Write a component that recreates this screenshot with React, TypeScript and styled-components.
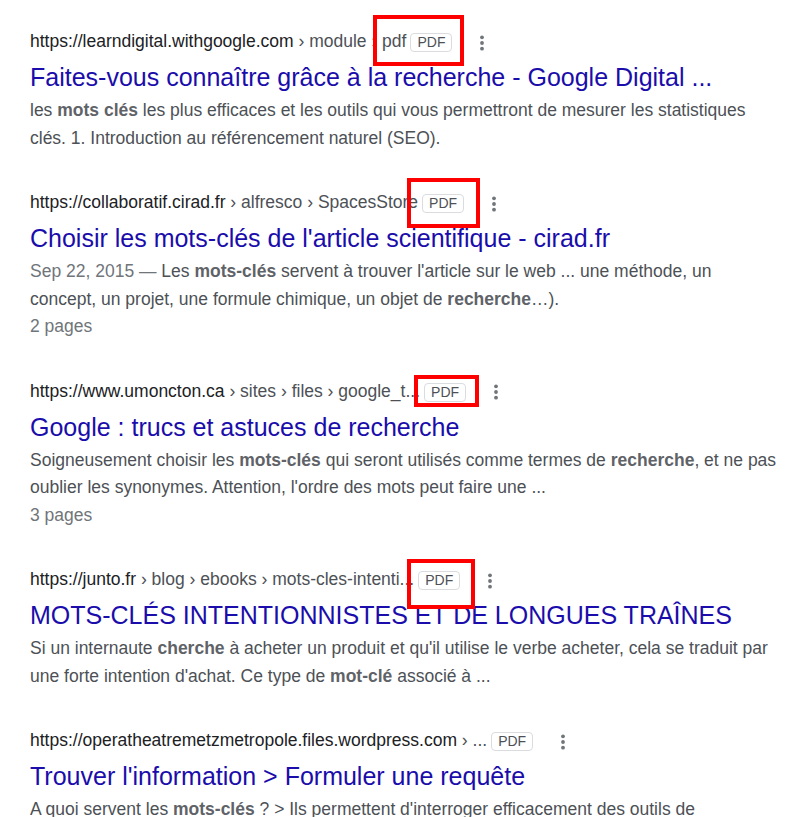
import React from "react";
import styled, { createGlobalStyle } from "styled-components";

const Global = createGlobalStyle`
  html, body { margin: 0; padding: 0; background: #fff; }
  body { font-family: "Liberation Sans", Arial, sans-serif; }
`;

const Page = styled.div`
  padding: 27px 0 0 30px;
  width: 750px;
`;

const Result = styled.div`
  margin-bottom: 36px;
`;

const UrlRow = styled.div`
  display: flex;
  align-items: center;
  height: 28px;
  font-size: 17.5px;
  line-height: 28px;
  white-space: nowrap;
`;

const Domain = styled.span`
  color: #202124;
`;

const Path = styled.span`
  color: #4d5156;
`;

const Badge = styled.span`
  position: relative;
  display: inline-block;
  margin-left: 4px;
  margin-top: 3px;
  padding: 0 6px;
  height: 17px;
  line-height: 17px;
  font-size: 14px;
  color: #4d5156;
  border: 1px solid #dadce0;
  border-radius: 4px;
`;

const Highlight = styled.span<{ $l: number; $t: number; $w: number; $h: number }>`
  position: absolute;
  left: ${(p) => p.$l}px;
  top: ${(p) => p.$t}px;
  width: ${(p) => p.$w}px;
  height: ${(p) => p.$h}px;
  box-sizing: border-box;
  border: 4px solid #ff0000;
  pointer-events: none;
`;

const MoreButton = styled.span`
  display: inline-flex;
  margin-left: 20px;
  margin-top: 3px;
  width: 20px;
  height: 20px;
  color: #70757a;
`;

const Title = styled.h3`
  margin: 6px 0 0;
  font-size: 25px;
  line-height: 32px;
  font-weight: 400;
  color: #1a0dab;
  white-space: nowrap;
`;

const Snippet = styled.div`
  margin-top: 4px;
  font-size: 17.5px;
  line-height: 27.5px;
  color: #4d5156;
  b {
    font-weight: 700;
    color: #5f6368;
  }
`;

const Muted = styled.span`
  color: #70757a;
`;

const Pages = styled.div`
  font-size: 17.5px;
  line-height: 27.5px;
  color: #70757a;
`;

const MoreIcon = () => (
  <svg width="20" height="20" viewBox="0 0 20 20" fill="currentColor">
    <circle cx="10" cy="4.3" r="1.9" />
    <circle cx="10" cy="10" r="1.9" />
    <circle cx="10" cy="15.7" r="1.9" />
  </svg>
);

type Box = { l: number; t: number; w: number; h: number };

type Item = {
  domain: string;
  path: string;
  title: string;
  snippet: React.ReactNode;
  pages?: string;
  box?: Box;
};

const items: Item[] = [
  {
    domain: "https://learndigital.withgoogle.com",
    path: "\u00a0› module › pdf",
    title: "Faites-vous connaître grâce à la recherche - Google Digital ...",
    snippet: (
      <>
        les <b>mots clés</b> les plus efficaces et les outils qui vous permettront de mesurer les
        statistiques clés. 1. Introduction au référencement naturel (SEO).
      </>
    ),
    box: { l: -38, t: -19, w: 91, h: 51 },
  },
  {
    domain: "https://collaboratif.cirad.fr",
    path: "\u00a0› alfresco › SpacesStore",
    title: "Choisir les mots-clés de l'article scientifique - cirad.fr",
    snippet: (
      <>
        <Muted>Sep 22, 2015 — </Muted>Les <b>mots-clés</b> servent à trouver l'article sur le web ...
        une méthode, un concept, un projet, une formule chimique, un objet de <b>recherche</b>…).
      </>
    ),
    pages: "2 pages",
    box: { l: -16, t: -17, w: 73, h: 50 },
  },
  {
    domain: "https://www.umoncton.ca",
    path: "\u00a0› sites › files › google_t...",
    title: "Google : trucs et astuces de recherche",
    snippet: (
      <>
        Soigneusement choisir les <b>mots-clés</b> qui seront utilisés comme termes de{" "}
        <b>recherche</b>, et ne pas oublier les synonymes. Attention, l'ordre des mots peut faire
        une ...
      </>
    ),
    pages: "3 pages",
    box: { l: -11, t: -9, w: 65, h: 32 },
  },
  {
    domain: "https://junto.fr",
    path: "\u00a0› blog › ebooks › mots-cles-intenti...",
    title: "MOTS-CLÉS INTENTIONNISTES ET DE LONGUES TRAÎNES",
    snippet: (
      <>
        Si un internaute <b>cherche</b> à acheter un produit et qu'il utilise le verbe acheter, cela
        se traduit par une forte intention d'achat. Ce type de <b>mot-clé</b> associé à ...
      </>
    ),
    box: { l: -12, t: -13, w: 68, h: 50 },
  },
  {
    domain: "https://operatheatremetzmetropole.files.wordpress.com",
    path: "\u00a0› ...",
    title: "Trouver l'information > Formuler une requête",
    snippet: (
      <>
        A quoi servent les <b>mots-clés</b> ? &gt; Ils permettent d'interroger efficacement des
        outils de recherche.
      </>
    ),
  },
];

export default function App() {
  return (
    <>
      <Global />
      <Page>
        {items.map((it, i) => (
          <Result key={i}>
            <UrlRow>
              <Domain>{it.domain}</Domain>
              <Path>{it.path}</Path>
              <Badge>
                PDF
                {it.box && <Highlight $l={it.box.l} $t={it.box.t} $w={it.box.w} $h={it.box.h} />}
              </Badge>
              <MoreButton>
                <MoreIcon />
              </MoreButton>
            </UrlRow>
            <Title>{it.title}</Title>
            <Snippet>{it.snippet}</Snippet>
            {it.pages && <Pages>{it.pages}</Pages>}
          </Result>
        ))}
      </Page>
    </>
  );
}
